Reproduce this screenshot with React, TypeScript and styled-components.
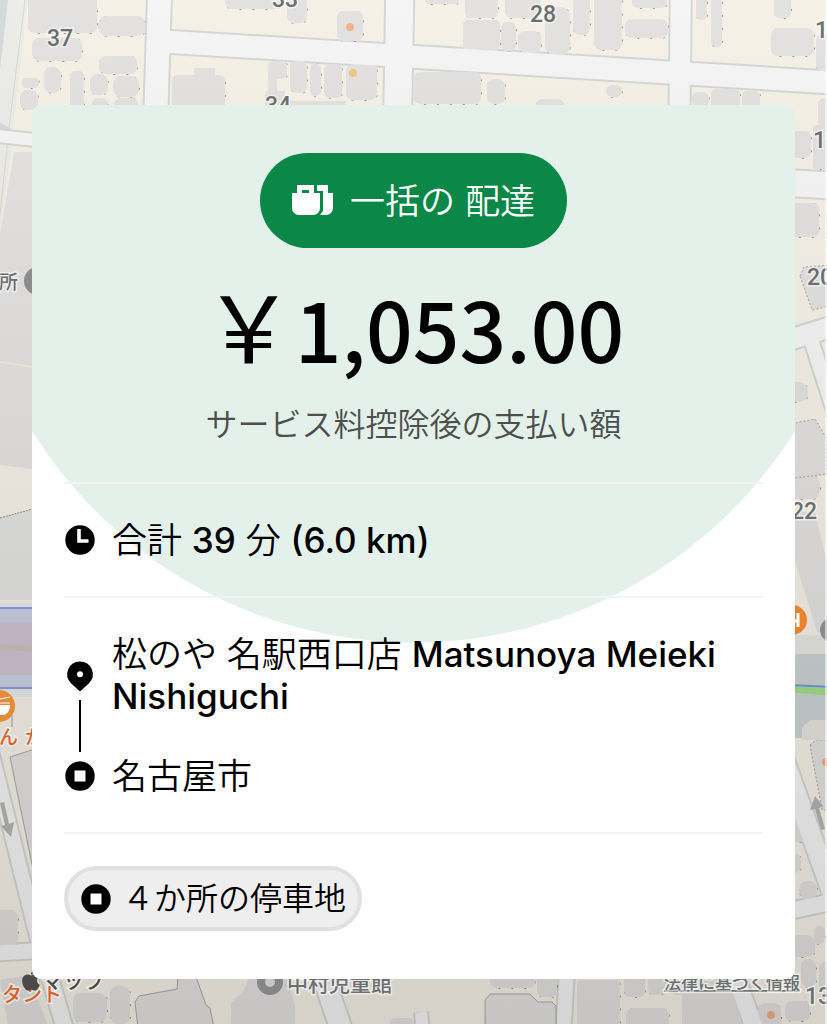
import React from "react";
import styled, { createGlobalStyle } from "styled-components";
import { FaApple } from "react-icons/fa";

const TEXT = `Inter, "Noto Sans CJK JP", sans-serif`;
const JP = `"Noto Sans CJK JP", sans-serif`;

const GlobalStyle = createGlobalStyle`
  *, *::before, *::after { box-sizing: border-box; }
  body { margin: 0; background: #d5d1c8; }
  h1, p, ul { margin: 0; padding: 0; }
`;

const Screen = styled.main`
  display: grid;
  grid-template-columns: minmax(0, 1fr);
  min-height: 100vh;
  overflow: hidden;
  color: #000;
  font-family: ${TEXT};
  font-weight: 350;
`;

const MapLayer = styled.div`
  grid-area: 1 / 1;
  min-height: 0;
  contain: size;

  svg.map {
    display: block;
    width: 100%;
    height: 100%;
  }
`;

const Sheet = styled.div`
  grid-area: 1 / 1;
  z-index: 1;
  padding: 105px 32px 45px;
`;

const Card = styled.section`
  padding: 48px 32px;
  border-radius: 9px;
  background:
    radial-gradient(circle 450px at 50% 88px, #e3f1ea 449px, transparent 450px),
    #fff;
`;

const Header = styled.header`
  display: flex;
  flex-direction: column;
  align-items: center;
  padding-bottom: 33px;
`;

const Badge = styled.div`
  display: flex;
  align-items: center;
  gap: 16px;
  height: 95px;
  padding: 0 32px;
  border-radius: 48px;
  background: #0b8848;
  color: #fff;
  font-size: 35px;
  line-height: 42px;
  white-space: nowrap;
`;

const Price = styled.h1`
  margin-top: 38px;
  font-size: 82px;
  font-weight: 500;
  line-height: 96px;
  white-space: nowrap;
`;

const Yen = styled.span`
  font-family: ${JP};
  font-size: 92px;
  font-weight: 400;
  line-height: 0;
`;

const Amount = styled.span`
  font-family: ${JP};
  line-height: 0;
`;

const Caption = styled.p`
  margin-top: 19px;
  color: #4c4f4d;
  font-size: 32px;
  line-height: 48px;
  white-space: nowrap;
`;

const Section = styled.div`
  display: grid;
  grid-template-columns: 32px minmax(0, 1fr);
  column-gap: 16px;
  padding: 35px 0;
  border-top: 2px solid #f3f3f3;
  font-size: 35px;
  line-height: 42px;
`;

const IconCell = styled.span`
  display: flex;
  align-items: center;
`;

const Rail = styled.div`
  display: flex;
  flex-direction: column;
  align-items: center;
  gap: 8px;
  padding: 27px 0 5px;
`;

const RailLine = styled.span`
  flex: 1;
  width: 2px;
  background: #000;
`;

const Stops = styled.ul`
  display: flex;
  flex-direction: column;
  gap: 38px;
  list-style: none;
`;

const Latin = styled.span`
  font-weight: 500;
`;

const Footer = styled.footer`
  padding-top: 32px;
  border-top: 2px solid #f3f3f3;
`;

const Chip = styled.button`
  display: flex;
  align-items: center;
  gap: 10px;
  height: 65px;
  padding: 0 12px;
  border: 4px solid #e0e0e0;
  border-radius: 33px;
  background: #eee;
  color: #000;
  font-family: ${TEXT};
  font-size: 32px;
  font-weight: 350;
  line-height: 42px;
  white-space: nowrap;
`;

const MapText = styled.text<{ $size?: number }>`
  font-family: Roboto, "Noto Sans CJK JP", sans-serif;
  font-size: ${(p) => p.$size ?? 23}px;
  font-weight: 500;
  stroke: rgba(255, 255, 255, 0.55);
  stroke-width: 3px;
  paint-order: stroke;
`;

const BagsIcon = () => (
  <svg width="42" height="32" viewBox="0 0 42 32" fill="#fff" aria-hidden="true">
    <path
      fillRule="evenodd"
      d="M0 8h5V0h17v8h6v15a7 7 0 0 1-7 7H7a7 7 0 0 1-7-7zM10 5v3h7V5z"
    />
    <path d="M25 0h11v8h5v15a7 7 0 0 1-7 7h-6l3-4V6h-6z" />
  </svg>
);

const ClockIcon = () => (
  <svg width="32" height="32" viewBox="0 0 32 32" aria-hidden="true">
    <circle cx="16" cy="16" r="14.7" />
    <path d="M15 5v12h9.500" fill="none" stroke="#fff" strokeWidth="3.600" />
  </svg>
);

const PinIcon = () => (
  <svg width="32" height="32" viewBox="0 0 32 32" aria-hidden="true">
    <path
      fillRule="evenodd"
      d="M16 1.500a12.700 12.700 0 0 1 9 21.700l-9 8.300-9-8.300A12.700 12.700 0 0 1 16 1.500zm0 9.700a3 3 0 1 0 0 6 3 3 0 0 0 0-6z"
    />
  </svg>
);

const StopIcon = () => (
  <svg width="32" height="32" viewBox="0 0 32 32" aria-hidden="true">
    <circle cx="16" cy="16" r="14.7" />
    <rect x="10.500" y="10.500" width="11" height="11" fill="#fff" />
  </svg>
);

/* x, y, width, height, corner radius */
const buildings: number[][] = [
  [28, -8, 69, 41, 6], [98, 16, 48, 20, 9], [32, 38, 50, 23, 7],
  [99, 56, 38, 18, 7], [44, 67, 17, 26, 8], [70, 71, 14, 40, 5],
  [90, 74, 18, 21, 8], [113, 76, 26, 21, 8], [22, 78, 17, 10, 4],
  [20, 90, 18, 20, 7], [92, 98, 16, 14, 6], [114, 98, 24, 14, 6],
  [172, 75, 53, 36, 5], [225, -12, 56, 21, 7],
  [287, -8, 20, 31, 7], [337, 11, 26, 30, 6], [268, 61, 19, 18, 5],
  [290, 60, 17, 33, 7], [310, 63, 11, 33, 6],
  [324, 64, 18, 34, 6], [346, 64, 31, 36, 7], [265, 91, 20, 16, 4],
  [425, -8, 34, 12, 4], [465, -8, 33, 26, 6],
  [505, -8, 35, 26, 6], [463, 20, 37, 31, 5], [501, 22, 15, 29, 6],
  [518, 31, 23, 22, 7], [545, 7, 25, 48, 9], [573, -9, 17, 44, 7],
  [594, -8, 28, 58, 7], [625, 19, 43, 19, 7], [632, -8, 35, 16, 6],
  [696, -8, 11, 28, 5], [711, -8, 11, 55, 5], [774, -8, 17, 26, 5],
  [771, 28, 43, 28, 7], [816, 34, 20, 37, 6], [414, 72, 67, 32, 6],
  [487, 79, 18, 25, 7], [536, 99, 28, 14, 6], [606, 85, 16, 12, 6],
  [692, 92, 17, 14, 6], [711, 89, 29, 20, 5], [742, 91, 18, 20, 5],
  [782, 131, 29, 27, 6], [818, 98, 20, 36, 7], [813, 125, 24, 44, 3],
  [782, 203, 37, 34, 6], [826, 210, 20, 30, 3], [784, 382, 24, 20, 9],
  [780, 475, 40, 24, 9], [-10, 910, 28, 36, 7], [783, 820, 26, 22, 9],
  [780, 853, 21, 20, 7], [799, 881, 18, 18, 8], [814, 926, 11, 18, 5],
  [801, 959, 15, 28, 7], [819, 962, 16, 36, 6], [782, 935, 33, 22, 8],
  [757, 1003, 24, 40, 8], [785, 1001, 25, 20, 7], [73, 993, 34, 29, 8],
  [110, 986, 20, 38, 8], [490, 964, 45, 24, 7], [537, 970, 20, 27, 6],
  [577, 980, 43, 60, 4], [624, 976, 21, 21, 6], [648, 976, 17, 19, 6],
  [626, 1008, 43, 30, 7], [670, 975, 22, 20, 6], [390, 1018, 24, 20, 5],
];

const roads: [string, number][] = [
  ["M160 -20 L149 330", 23],
  ["M400 -20 L394 330", 27],
  ["M681 -20 L677 330", 20],
  ["M155 41 L840 83", 22],
  ["M-20 134 L35 140", 12],
  ["M770 182 L840 186", 26],
  ["M780 343 L840 324", 20],
  ["M808 330 L840 430", 14],
  ["M-16 723 L48 980", 14],
  ["M-20 954 L50 950", 15],
  ["M775 734 L840 915", 19],
  ["M780 913 L840 900", 16],
  ["M568 950 L563 1040", 14],
  ["M730 960 L762 1050", 17],
  ["M326 985 L345 1040", 21],
  ["M45 960 L68 1040", 16],
  ["M421 1012 L424 1040", 12],
];

const MapDrawing = () => (
  <svg className="map" viewBox="0 0 827 1024" preserveAspectRatio="xMidYMin slice" aria-hidden="true">
    <defs>
      <linearGradient id="dim" x1="0" y1="0" x2="0" y2="1">
        <stop offset="0" stopColor="#000" stopOpacity="0" />
        <stop offset="0.550" stopColor="#000" stopOpacity="0.070" />
        <stop offset="1" stopColor="#000" stopOpacity="0.130" />
      </linearGradient>
    </defs>
    <rect width="827" height="1024" fill="#f5f1e7" />

    <path d="M0 0H28L12 140 0 235z" fill="#ecede8" />
    <path d="M0 0H8L0 70zM0 122l11 7-2 16-9-2z" fill="#d5dadd" />
    <path d="M25 0L9 128 0 215" fill="none" stroke="#d8dad3" />

    {/* city blocks along the left edge */}
    <path d="M0 235L14 152H40V470L0 465z" fill="#e4e3e2" />
    <path d="M0 362L40 368" stroke="#f0ece0" strokeWidth="2" />
    <path d="M0 518L40 508V600H0z" fill="#e3e3e1" />
    <path d="M0 518L40 507" stroke="#8c8982" strokeDasharray="2 1" />

    {roads.map(([d, w]) => (
      <path key={d} d={d} stroke="#d6d8d5" strokeWidth={w + 4} fill="none" />
    ))}
    <g stroke="#9a9a97" strokeWidth="1" strokeDasharray="2 11">
      {buildings.map(([x, y, w, h, r], i) => (
        <rect key={i} x={x + 0.5} y={y + 0.5} width={w} height={h} rx={r} fill="none" />
      ))}
    </g>
    {buildings.map(([x, y, w, h, r], i) => (
      <rect key={i} x={x} y={y} width={w} height={h} rx={r} fill="#e4e2e1" />
    ))}
    <path d="M194 68h21v12h-21zM268 68h9v26h-9zM290 101h56v10h-56z" fill="#e4e2e1" />
    {roads.map(([d, w]) => (
      <path key={d} d={d} stroke="#f5f5f6" strokeWidth={w} fill="none" />
    ))}

    <g fill="#e4e2e1" stroke="#a9a8a5" strokeWidth="1">
      <path d="M135 1002l4-6 38-7 1-12h18l10 28 4 3 4 20H138z" />
      <path d="M231 1003l13-13 6-15h36l9 30v30h-64z" stroke="none" />
      <path d="M485 1000l5-6h40l8 8h14l4 4v30h-71z" />
      <path d="M682 978h46l14 46h-60z" stroke="none" />
      <path d="M780 426l35-7 12 20v35l-47 6z" strokeDasharray="2 2" />
      <path d="M800 276l4-9 30-2v40l-22 5z" strokeDasharray="2 2" />
      <path d="M780 512h35l12 50v70h-10z" stroke="none" />
      <path d="M10 757l25-8v130z" />
      <path d="M810 745l6-5h14v70h-8z" strokeDasharray="2 2" />
      <path d="M0 980l28-5 20 50H8z" stroke="none" />
    </g>

    {/* railway on the left, canal on the right */}
    <rect x="0" y="603" width="36" height="94" fill="#e6e9ea" />
    <rect x="0" y="609" width="36" height="78" fill="#c9cfe2" />
    <rect x="0" y="622" width="36" height="53" fill="#cfc2d3" />
    <path d="M0 608H36M0 688H36" stroke="#8f9bdc" strokeWidth="2" />
    <path d="M0 647L36 649" stroke="#c8c3b9" strokeWidth="6" />
    <rect x="790" y="635" width="40" height="19" fill="#e6e6e2" />
    <rect x="790" y="654" width="40" height="84" fill="#cbd2d4" />
    <path d="M802 740v-12l8-8h20v20z" fill="#e6e5df" />
    <path d="M790 689L830 692" stroke="#a3dc8c" strokeWidth="7" />
    <path d="M790 685L830 687" stroke="#6d9bd9" strokeWidth="2" />
    <path d="M12 715v12" stroke="#a2a09b" />

    <circle cx="350" cy="27" r="4" fill="#f3b48f" />
    <circle cx="353" cy="73" r="4" fill="#f0c885" />
    <circle cx="771" cy="1015" r="4" fill="#f0ac8b" />
    <circle cx="826" cy="762" r="4" fill="#f0ac8b" />

    <rect width="827" height="1024" fill="url(#dim)" />

    {/* one-way arrows */}
    <g fill="#a2a2a1">
      <path d="M0 803l4-1 5 22 5-2-3 15-10-11 4-1z" />
      <path d="M815 796l8 10-4 2 6 21-4 1-6-21-5 1z" />
    </g>

    <circle cx="38" cy="281" r="14" fill="#8b8b8b" />
    <circle cx="-1" cy="706" r="16" fill="#e58b38" />
    <path d="M0 699l10-2M0 703h10" stroke="#fff" strokeWidth="1" fill="none" />
    <path d="M-6 705h16c0 6-3 9-6 10h-10z" fill="#fff" />
    <circle cx="792" cy="620" r="15" fill="#e9812d" />
    <path d="M798 613v14M791 621h6" stroke="#fff" strokeWidth="3" fill="none" />
    <circle cx="832" cy="630" r="12" fill="#8b8b8b" />
    <circle cx="270" cy="982" r="9" fill="none" stroke="#858585" strokeWidth="8" />

    <g fill="#6c6f70">
      <MapText x="47" y="46">37</MapText>
      <MapText x="272" y="7">33</MapText>
      <MapText x="265" y="113">34</MapText>
      <MapText x="530" y="22">28</MapText>
      <MapText x="815" y="38">1</MapText>
      <MapText x="813" y="148">19</MapText>
      <MapText x="807" y="285">20</MapText>
      <MapText x="791" y="519">22</MapText>
      <MapText x="805" y="1004">13</MapText>
      <MapText x="-1" y="289" $size={19}>所</MapText>
      <MapText x="287" y="991" $size={21}>中村児童館</MapText>
      <MapText x="664" y="989" $size={17} textDecoration="underline">法律に基づく情報</MapText>
    </g>
    <g fill="#d7612c">
      <MapText x="-1" y="744" $size={19}>ん</MapText>
      <MapText x="25" y="744" $size={19}>か</MapText>
      <MapText x="2" y="1002" $size={20}>タント</MapText>
    </g>
    <g fill="#4b4a48">
      <FaApple x={19} y={968} size={24} color="#4b4a48" />
      <MapText x="42" y="988" $size={21}>マップ</MapText>
    </g>
    <rect x="825" width="2" height="1024" fill="#fff" opacity="0.600" />
  </svg>
);

export default function App() {
  return (
    <Screen>
      <GlobalStyle />
      <MapLayer>
        <MapDrawing />
      </MapLayer>
      <Sheet>
        <Card>
          <Header>
            <Badge>
              <BagsIcon />
              <span>一括の 配達</span>
            </Badge>
            <Price>
              <Yen>￥</Yen>
              <Amount>1,053.00</Amount>
            </Price>
            <Caption>サービス料控除後の支払い額</Caption>
          </Header>
          <Section>
            <IconCell>
              <ClockIcon />
            </IconCell>
            <p>
              合計 <Latin>39</Latin> 分 <Latin>(6.0 km)</Latin>
            </p>
          </Section>
          <Section>
            <Rail>
              <PinIcon />
              <RailLine />
              <StopIcon />
            </Rail>
            <Stops>
              <li>
                松のや 名駅西口店 <Latin>Matsunoya Meieki Nishiguchi</Latin>
              </li>
              <li>名古屋市</li>
            </Stops>
          </Section>
          <Footer>
            <Chip type="button">
              <StopIcon />
              <span>４か所の停車地</span>
            </Chip>
          </Footer>
        </Card>
      </Sheet>
    </Screen>
  );
}
